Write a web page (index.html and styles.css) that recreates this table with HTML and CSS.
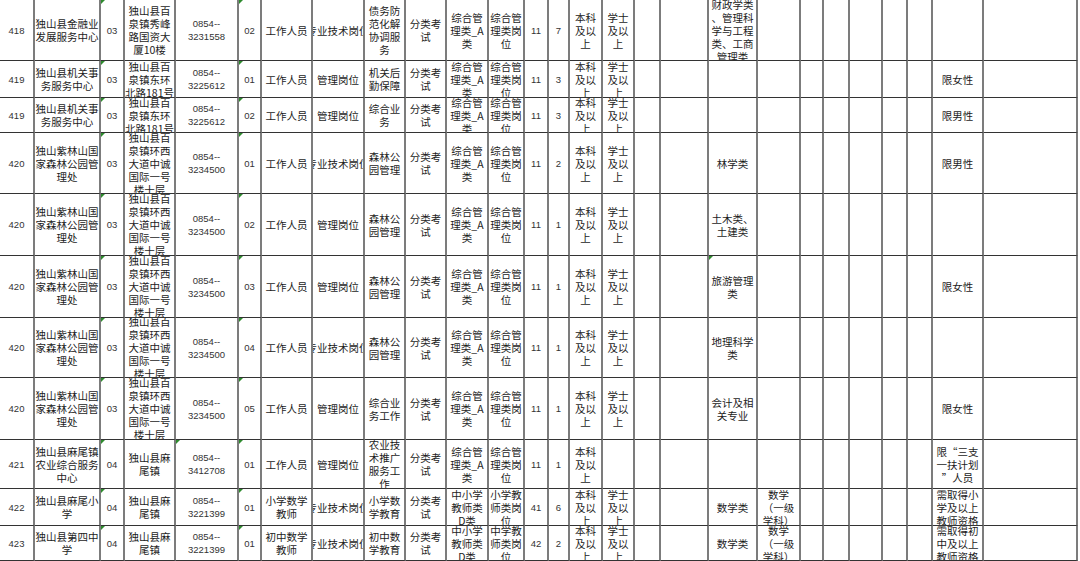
FILE: index.html
```html
<!DOCTYPE html>
<html lang="zh-CN">
<head>
<meta charset="utf-8">
<title>岗位表</title>
<link rel="stylesheet" href="styles.css">
</head>
<body>
<div class="sheet">
  <!-- 418 -->
  <div class="c n"><p>418</p></div>
  <div class="c"><p>独山县金融业<br>发展服务中心</p></div>
  <div class="c n g"><p>03</p></div>
  <div class="c"><p>独山县百<br>泉镇秀峰<br>路国资大<br>厦10楼</p></div>
  <div class="c n"><p>0854--<br>3231558</p></div>
  <div class="c n g"><p>02</p></div>
  <div class="c"><p>工作人员</p></div>
  <div class="c"><p>专业技术岗位</p></div>
  <div class="c"><p>债务防<br>范化解<br>协调服<br>务</p></div>
  <div class="c"><p>分类考<br>试</p></div>
  <div class="c"><p>综合管<br>理类_A<br>类</p></div>
  <div class="c"><p>综合管<br>理类岗<br>位</p></div>
  <div class="c n"><p>11</p></div>
  <div class="c n"><p>7</p></div>
  <div class="c"><p>本科<br>及以<br>上</p></div>
  <div class="c"><p>学士<br>及以<br>上</p></div>
  <div class="c"></div>
  <div class="c"></div>
  <div class="c"><p>财政学类<br>、管理科<br>学与工程<br>类、工商<br>管理类</p></div>
  <div class="c"></div><div class="c"></div><div class="c"></div><div class="c"></div><div class="c"></div><div class="c"></div>
  <div class="c"></div>
  <div class="c"></div>

  <!-- 419 a -->
  <div class="c n"><p>419</p></div>
  <div class="c"><p>独山县机关事<br>务服务中心</p></div>
  <div class="c n g"><p>03</p></div>
  <div class="c"><p>独山县百<br>泉镇东环<br>北路181号</p></div>
  <div class="c n"><p>0854--<br>3225612</p></div>
  <div class="c n g"><p>01</p></div>
  <div class="c"><p>工作人员</p></div>
  <div class="c"><p>管理岗位</p></div>
  <div class="c"><p>机关后<br>勤保障</p></div>
  <div class="c"><p>分类考<br>试</p></div>
  <div class="c"><p>综合管<br>理类_A<br>类</p></div>
  <div class="c"><p>综合管<br>理类岗<br>位</p></div>
  <div class="c n"><p>11</p></div>
  <div class="c n"><p>3</p></div>
  <div class="c"><p>本科<br>及以<br>上</p></div>
  <div class="c"><p>学士<br>及以<br>上</p></div>
  <div class="c"></div>
  <div class="c"></div>
  <div class="c"></div>
  <div class="c"></div><div class="c"></div><div class="c"></div><div class="c"></div><div class="c"></div><div class="c"></div>
  <div class="c"><p>限女性</p></div>
  <div class="c"></div>

  <!-- 419 b -->
  <div class="c n"><p>419</p></div>
  <div class="c"><p>独山县机关事<br>务服务中心</p></div>
  <div class="c n g"><p>03</p></div>
  <div class="c"><p>独山县百<br>泉镇东环<br>北路181号</p></div>
  <div class="c n"><p>0854--<br>3225612</p></div>
  <div class="c n g"><p>02</p></div>
  <div class="c"><p>工作人员</p></div>
  <div class="c"><p>管理岗位</p></div>
  <div class="c"><p>综合业<br>务</p></div>
  <div class="c"><p>分类考<br>试</p></div>
  <div class="c"><p>综合管<br>理类_A<br>类</p></div>
  <div class="c"><p>综合管<br>理类岗<br>位</p></div>
  <div class="c n"><p>11</p></div>
  <div class="c n"><p>3</p></div>
  <div class="c"><p>本科<br>及以<br>上</p></div>
  <div class="c"><p>学士<br>及以<br>上</p></div>
  <div class="c"></div>
  <div class="c"></div>
  <div class="c"></div>
  <div class="c"></div><div class="c"></div><div class="c"></div><div class="c"></div><div class="c"></div><div class="c"></div>
  <div class="c"><p>限男性</p></div>
  <div class="c"></div>

  <!-- 420 a -->
  <div class="c n"><p>420</p></div>
  <div class="c"><p>独山紫林山国<br>家森林公园管<br>理处</p></div>
  <div class="c n g"><p>03</p></div>
  <div class="c"><p>独山县百<br>泉镇环西<br>大道中诚<br>国际一号<br>楼十层</p></div>
  <div class="c n"><p>0854--<br>3234500</p></div>
  <div class="c n g"><p>01</p></div>
  <div class="c"><p>工作人员</p></div>
  <div class="c"><p>专业技术岗位</p></div>
  <div class="c"><p>森林公<br>园管理</p></div>
  <div class="c"><p>分类考<br>试</p></div>
  <div class="c"><p>综合管<br>理类_A<br>类</p></div>
  <div class="c"><p>综合管<br>理类岗<br>位</p></div>
  <div class="c n"><p>11</p></div>
  <div class="c n"><p>2</p></div>
  <div class="c"><p>本科<br>及以<br>上</p></div>
  <div class="c"><p>学士<br>及以<br>上</p></div>
  <div class="c"></div>
  <div class="c"></div>
  <div class="c"><p>林学类</p></div>
  <div class="c"></div><div class="c"></div><div class="c"></div><div class="c"></div><div class="c"></div><div class="c"></div>
  <div class="c"><p>限男性</p></div>
  <div class="c"></div>

  <!-- 420 b -->
  <div class="c n"><p>420</p></div>
  <div class="c"><p>独山紫林山国<br>家森林公园管<br>理处</p></div>
  <div class="c n g"><p>03</p></div>
  <div class="c"><p>独山县百<br>泉镇环西<br>大道中诚<br>国际一号<br>楼十层</p></div>
  <div class="c n"><p>0854--<br>3234500</p></div>
  <div class="c n g"><p>02</p></div>
  <div class="c"><p>工作人员</p></div>
  <div class="c"><p>管理岗位</p></div>
  <div class="c"><p>森林公<br>园管理</p></div>
  <div class="c"><p>分类考<br>试</p></div>
  <div class="c"><p>综合管<br>理类_A<br>类</p></div>
  <div class="c"><p>综合管<br>理类岗<br>位</p></div>
  <div class="c n"><p>11</p></div>
  <div class="c n"><p>1</p></div>
  <div class="c"><p>本科<br>及以<br>上</p></div>
  <div class="c"><p>学士<br>及以<br>上</p></div>
  <div class="c"></div>
  <div class="c"></div>
  <div class="c"><p>土木类、<br>土建类</p></div>
  <div class="c"></div><div class="c"></div><div class="c"></div><div class="c"></div><div class="c"></div><div class="c"></div>
  <div class="c"></div>
  <div class="c"></div>

  <!-- 420 c -->
  <div class="c n"><p>420</p></div>
  <div class="c"><p>独山紫林山国<br>家森林公园管<br>理处</p></div>
  <div class="c n g"><p>03</p></div>
  <div class="c"><p>独山县百<br>泉镇环西<br>大道中诚<br>国际一号<br>楼十层</p></div>
  <div class="c n"><p>0854--<br>3234500</p></div>
  <div class="c n g"><p>03</p></div>
  <div class="c"><p>工作人员</p></div>
  <div class="c"><p>管理岗位</p></div>
  <div class="c"><p>森林公<br>园管理</p></div>
  <div class="c"><p>分类考<br>试</p></div>
  <div class="c"><p>综合管<br>理类_A<br>类</p></div>
  <div class="c"><p>综合管<br>理类岗<br>位</p></div>
  <div class="c n"><p>11</p></div>
  <div class="c n"><p>1</p></div>
  <div class="c"><p>本科<br>及以<br>上</p></div>
  <div class="c"><p>学士<br>及以<br>上</p></div>
  <div class="c"></div>
  <div class="c"></div>
  <div class="c g"><p>旅游管理<br>类</p></div>
  <div class="c"></div><div class="c"></div><div class="c"></div><div class="c"></div><div class="c"></div><div class="c"></div>
  <div class="c"><p>限女性</p></div>
  <div class="c"></div>

  <!-- 420 d -->
  <div class="c n"><p>420</p></div>
  <div class="c"><p>独山紫林山国<br>家森林公园管<br>理处</p></div>
  <div class="c n g"><p>03</p></div>
  <div class="c"><p>独山县百<br>泉镇环西<br>大道中诚<br>国际一号<br>楼十层</p></div>
  <div class="c n"><p>0854--<br>3234500</p></div>
  <div class="c n g"><p>04</p></div>
  <div class="c"><p>工作人员</p></div>
  <div class="c"><p>专业技术岗位</p></div>
  <div class="c"><p>森林公<br>园管理</p></div>
  <div class="c"><p>分类考<br>试</p></div>
  <div class="c"><p>综合管<br>理类_A<br>类</p></div>
  <div class="c"><p>综合管<br>理类岗<br>位</p></div>
  <div class="c n"><p>11</p></div>
  <div class="c n"><p>1</p></div>
  <div class="c"><p>本科<br>及以<br>上</p></div>
  <div class="c"><p>学士<br>及以<br>上</p></div>
  <div class="c"></div>
  <div class="c"></div>
  <div class="c"><p>地理科学<br>类</p></div>
  <div class="c"></div><div class="c"></div><div class="c"></div><div class="c"></div><div class="c"></div><div class="c"></div>
  <div class="c"></div>
  <div class="c"></div>

  <!-- 420 e -->
  <div class="c n"><p>420</p></div>
  <div class="c"><p>独山紫林山国<br>家森林公园管<br>理处</p></div>
  <div class="c n g"><p>03</p></div>
  <div class="c"><p>独山县百<br>泉镇环西<br>大道中诚<br>国际一号<br>楼十层</p></div>
  <div class="c n"><p>0854--<br>3234500</p></div>
  <div class="c n g"><p>05</p></div>
  <div class="c"><p>工作人员</p></div>
  <div class="c"><p>管理岗位</p></div>
  <div class="c"><p>综合业<br>务工作</p></div>
  <div class="c"><p>分类考<br>试</p></div>
  <div class="c"><p>综合管<br>理类_A<br>类</p></div>
  <div class="c"><p>综合管<br>理类岗<br>位</p></div>
  <div class="c n"><p>11</p></div>
  <div class="c n"><p>1</p></div>
  <div class="c"><p>本科<br>及以<br>上</p></div>
  <div class="c"><p>学士<br>及以<br>上</p></div>
  <div class="c"></div>
  <div class="c"></div>
  <div class="c"><p>会计及相<br>关专业</p></div>
  <div class="c"></div><div class="c"></div><div class="c"></div><div class="c"></div><div class="c"></div><div class="c"></div>
  <div class="c"><p>限女性</p></div>
  <div class="c"></div>

  <!-- 421 -->
  <div class="c n"><p>421</p></div>
  <div class="c"><p>独山县麻尾镇<br>农业综合服务<br>中心</p></div>
  <div class="c n g"><p>04</p></div>
  <div class="c"><p>独山县麻<br>尾镇</p></div>
  <div class="c n g"><p>0854--<br>3412708</p></div>
  <div class="c n g"><p>01</p></div>
  <div class="c"><p>工作人员</p></div>
  <div class="c"><p>管理岗位</p></div>
  <div class="c"><p>农业技<br>术推广<br>服务工<br>作</p></div>
  <div class="c"><p>分类考<br>试</p></div>
  <div class="c"><p>综合管<br>理类_A<br>类</p></div>
  <div class="c"><p>综合管<br>理类岗<br>位</p></div>
  <div class="c n"><p>11</p></div>
  <div class="c n"><p>1</p></div>
  <div class="c"><p>本科<br>及以<br>上</p></div>
  <div class="c"></div>
  <div class="c"></div>
  <div class="c"></div>
  <div class="c"></div>
  <div class="c"></div><div class="c"></div><div class="c"></div><div class="c"></div><div class="c"></div><div class="c"></div>
  <div class="c"><p>限“三支<br>一扶计划<br>”人员</p></div>
  <div class="c"></div>

  <!-- 422 -->
  <div class="c n"><p>422</p></div>
  <div class="c"><p>独山县麻尾小<br>学</p></div>
  <div class="c n g"><p>04</p></div>
  <div class="c"><p>独山县麻<br>尾镇</p></div>
  <div class="c n"><p>0854--<br>3221399</p></div>
  <div class="c n g"><p>01</p></div>
  <div class="c"><p>小学数学<br>教师</p></div>
  <div class="c"><p>专业技术岗位</p></div>
  <div class="c"><p>小学数<br>学教育</p></div>
  <div class="c"><p>分类考<br>试</p></div>
  <div class="c"><p>中小学<br>教师类<br>D类</p></div>
  <div class="c"><p>小学教<br>师类岗<br>位</p></div>
  <div class="c n"><p>41</p></div>
  <div class="c n"><p>6</p></div>
  <div class="c"><p>本科<br>及以<br>上</p></div>
  <div class="c"><p>学士<br>及以<br>上</p></div>
  <div class="c"></div>
  <div class="c"></div>
  <div class="c"><p>数学类</p></div>
  <div class="c"><p>数学<br>（一级<br>学科）</p></div>
  <div class="c"></div><div class="c"></div><div class="c"></div><div class="c"></div><div class="c"></div>
  <div class="c"><p>需取得小<br>学及以上<br>教师资格</p></div>
  <div class="c"></div>

  <!-- 423 -->
  <div class="c n"><p>423</p></div>
  <div class="c"><p>独山县第四中<br>学</p></div>
  <div class="c n g"><p>04</p></div>
  <div class="c"><p>独山县麻<br>尾镇</p></div>
  <div class="c n"><p>0854--<br>3221399</p></div>
  <div class="c n g"><p>01</p></div>
  <div class="c"><p>初中数学<br>教师</p></div>
  <div class="c"><p>专业技术岗位</p></div>
  <div class="c"><p>初中数<br>学教育</p></div>
  <div class="c"><p>分类考<br>试</p></div>
  <div class="c"><p>中小学<br>教师类<br>D类</p></div>
  <div class="c"><p>中学教<br>师类岗<br>位</p></div>
  <div class="c n"><p>42</p></div>
  <div class="c n"><p>2</p></div>
  <div class="c"><p>本科<br>及以<br>上</p></div>
  <div class="c"><p>学士<br>及以<br>上</p></div>
  <div class="c"></div>
  <div class="c"></div>
  <div class="c"><p>数学类</p></div>
  <div class="c"><p>数学<br>（一级<br>学科）</p></div>
  <div class="c"></div><div class="c"></div><div class="c"></div><div class="c"></div><div class="c"></div>
  <div class="c"><p>需取得初<br>中及以上<br>教师资格</p></div>
  <div class="c"></div>
</div>
</body>
</html>
```

FILE: styles.css
```css
html, body {
  margin: 0;
  padding: 0;
  background: #ffffff;
}

body {
  width: 1080px;
  height: 561px;
  overflow: hidden;
  font-family: "Noto Sans CJK SC", "Noto Sans", sans-serif;
  font-size: 10.5px;
  color: #1c1c1c;
}

.sheet {
  display: grid;
  grid-template-columns: 35px 66px 24px 51px 63px 23px 51px 52px 41px 41px 42px 36px 24px 21px 33px 32px 26px 48px 49px 43px 23px 26px 33px 25px 25px 51px 94px;
  grid-template-rows: 61px 37px 35px 61px 62px 62px 60px 62px 49px 37px 35px;
  width: 1078px;
}

.c {
  position: relative;
  box-sizing: border-box;
  border-right: 2px solid #7c7c7c;
  border-bottom: 1px solid #333333;
  display: flex;
  align-items: center;
  justify-content: center;
  overflow: hidden;
  white-space: nowrap;
  text-align: center;
  line-height: 13px;
}

.c p {
  margin: 0;
}

.n {
  font-family: "Liberation Sans", Arial, sans-serif;
  font-size: 9.5px;
  color: #333333;
}

.g::before {
  content: "";
  position: absolute;
  top: 0;
  left: 0;
  width: 0;
  height: 0;
  border-top: 4px solid #2e8b2e;
  border-right: 4px solid transparent;
}
```
